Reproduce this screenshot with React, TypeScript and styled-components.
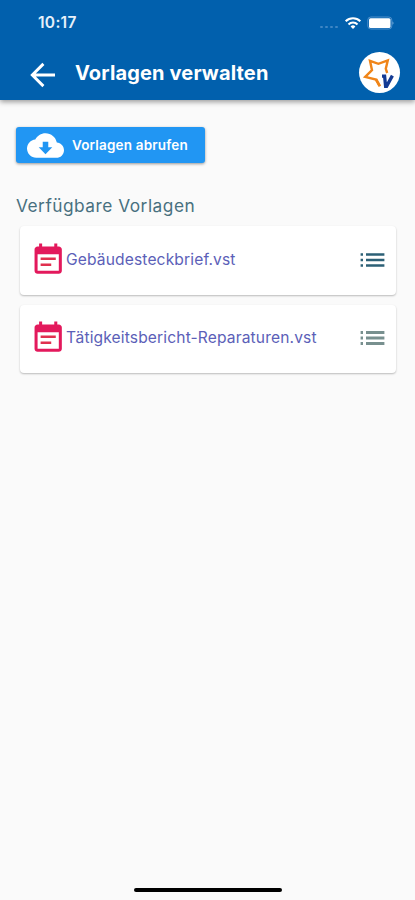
import React from "react";
import styled, { createGlobalStyle } from "styled-components";

const GlobalStyle = createGlobalStyle`
  * { box-sizing: border-box; }
  body { margin: 0; background: #fafafa; font-family: Inter, Roboto, sans-serif; }
`;

const Screen = styled.div`
  display: flex;
  flex-direction: column;
  height: 900px;
  width: 415px;
  background: #fafafa;
  overflow: hidden;
`;

const Header = styled.header`
  flex: none;
  height: 100px;
  background: #0160ad;
  box-shadow: 0 2px 5px rgba(0, 0, 0, 0.38);
  color: #fff;
`;

const StatusBar = styled.div`
  display: flex;
  align-items: center;
  height: 46px;
  padding: 0 21px 0 38px;
`;

const Clock = styled.span`
  flex: 1;
  font-size: 15.5px;
  font-weight: 600;
  line-height: 20px;
  letter-spacing: 0.3px;
  color: #e6f0fa;
`;

const StatusIcons = styled.svg`
  display: block;
  flex: none;
`;

const AppBar = styled.div`
  display: flex;
  align-items: center;
  height: 53px;
  padding: 0 15px 0 30px;
`;

const Title = styled.h1`
  flex: 1;
  margin: 0 0 0 19px;
  font-size: 20px;
  font-weight: 700;
  line-height: 26px;
  letter-spacing: 0.15px;
`;

const Avatar = styled.div`
  width: 41px;
  height: 41px;
  border-radius: 50%;
  background: #fff;
  overflow: hidden;
`;

const Content = styled.main`
  flex: 1;
  display: flex;
  flex-direction: column;
  align-items: flex-start;
  padding: 27px 19px 0 16px;
`;

const FetchButton = styled.button`
  display: flex;
  align-items: center;
  gap: 8px;
  width: 189px;
  height: 36px;
  padding: 0 0 0 11px;
  border: 0;
  border-radius: 3px;
  background: #2196f3;
  box-shadow: 0 1px 3px rgba(0, 0, 0, 0.4);
  color: #fff;
  font: 600 13.5px/20px Inter, Roboto, sans-serif;
  letter-spacing: 0.17px;
  white-space: nowrap;
`;

const SectionTitle = styled.h2`
  margin: 31px 0 0;
  font-size: 17.3px;
  font-weight: 400;
  line-height: 24px;
  letter-spacing: 0.5px;
  color: #48707f;
`;

const TemplateList = styled.ul`
  display: flex;
  flex-direction: column;
  gap: 10px;
  align-self: stretch;
  margin: 8px 0 0 4px;
  padding: 0;
  list-style: none;
`;

const TemplateCard = styled.li`
  display: flex;
  align-items: center;
  height: 68.5px;
  padding: 0 11px 1px 9.6px;
  border-radius: 4px;
  background: #fff;
  box-shadow: 0 1px 2px rgba(0, 0, 0, 0.26);
`;

const FileName = styled.span`
  flex: 1;
  font-size: 15.6px;
  line-height: 22px;
  letter-spacing: 0.13px;
  color: #5c5fb8;
  white-space: nowrap;
`;

const HomeIndicator = styled.div`
  flex: none;
  align-self: center;
  width: 148px;
  height: 4px;
  margin-bottom: 8px;
  border-radius: 2px;
  background: #000;
`;

const StatusGlyphs = () => (
  <StatusIcons width="76" height="16" viewBox="318 15 76 16">
    <g fill="#3f86c4">
      <rect x="320" y="26" width="3" height="2" rx="1" />
      <rect x="325" y="26" width="3" height="2" rx="1" />
      <rect x="330" y="26" width="3" height="2" rx="1" />
      <rect x="335" y="26" width="3" height="2" rx="1" />
    </g>
    <g fill="none" stroke="#fff" strokeWidth="2.1">
      <path d="M345.7 21.2a10.4 10.4 0 0 1 14.6 0" />
      <path d="M348.5 24.4a6.4 6.4 0 0 1 9 0" />
    </g>
    <path d="M350.6 26.4a3.5 3.5 0 0 1 4.8 0L353 29z" fill="#fff" />
    <rect x="367.8" y="17" width="24" height="12" rx="3" fill="none" stroke="#4c8fcb" strokeWidth="1" />
    <rect x="369" y="18.3" width="21.5" height="9.6" rx="1.5" fill="#fff" />
    <path d="M392.6 21.2q1.6 1.8 0 3.6z" fill="#a9caea" />
  </StatusIcons>
);

const BackArrowSvg = styled.svg`
  flex: none;
  margin-top: 4px;
`;

const BackArrow = () => (
  <BackArrowSvg width="26" height="26" viewBox="0 0 26 26" fill="none" stroke="#fff" strokeWidth="2.9">
    <path d="M25 13H3M13.4 1.9L2.3 13l11.1 11.1" />
  </BackArrowSvg>
);

const Logo = () => (
  <svg width="41" height="41" viewBox="0 0 41 41" fill="none">
    <path
      d="M20.5 33.6L17 27.6L6.2 24.8L13 18.2L11 8.8L19.4 11.8L28.8 8.4L26.8 16.8L28.2 21"
      stroke="#f08519"
      strokeWidth="2.4"
      strokeLinejoin="miter"
    />
    <path d="M17 27.2L20.9 34.4" stroke="#f08519" strokeWidth="2.7" />
    <path d="M23 24.2h2.6l1 10.2h1L33.4 23.6" stroke="#143b94" strokeWidth="3.3" />
  </svg>
);

const CloudIcon = () => (
  <svg width="37" height="37" viewBox="0 0 24 24" fill="#fff">
    <path d="M19.35 10.04C18.67 6.59 15.64 4 12 4 9.11 4 6.6 5.64 5.35 8.04 2.34 8.36 0 10.91 0 14c0 3.31 2.69 6 6 6h13c2.76 0 5-2.24 5-5 0-2.64-2.05-4.78-4.65-4.96zM16.4 13.2L12 17.6l-4.4-4.4h2.6V9.6h3.6v3.6h2.6z" />
  </svg>
);

const NoteIcon = styled.svg`
  flex: none;
  display: block;
`;

const EventNote = () => (
  <NoteIcon width="36.4" height="36.4" viewBox="0 0 24 24" fill="#e3195c">
    <path d="M19 3h-1V1h-2v2H8V1H6v2H5c-1.1 0-2 .9-2 2v14c0 1.1.9 2 2 2h14c1.1 0 2-.9 2-2V5c0-1.1-.9-2-2-2zm0 16H5V8h14v11z" />
    <path d="M7 10.2h10v1.7H7zM7 14.2h7v1.7H7z" fill="#e0304f" />
  </NoteIcon>
);

const ListIcon = ({ color, weight }: { color: string; weight: number }) => (
  <svg width="25" height="16" viewBox="0 0 25 16" stroke={color} strokeWidth={weight}>
    <path d="M.6 2.4H3M.6 7.9H3M.6 13.4H3M6 2.4h18.4M6 7.9h18.4M6 13.4h18.4" />
  </svg>
);

const templates = [
  { name: "Gebäudesteckbrief.vst", color: "#2c6076", weight: 2.5 },
  { name: "Tätigkeitsbericht-Reparaturen.vst", color: "#78908f", weight: 3 },
];

export default function App() {
  return (
    <>
      <GlobalStyle />
      <Screen>
        <Header>
          <StatusBar>
            <Clock>10:17</Clock>
            <StatusGlyphs />
          </StatusBar>
          <AppBar>
            <BackArrow />
            <Title>Vorlagen verwalten</Title>
            <Avatar>
              <Logo />
            </Avatar>
          </AppBar>
        </Header>
        <Content>
          <FetchButton>
            <CloudIcon />
            Vorlagen abrufen
          </FetchButton>
          <SectionTitle>Verfügbare Vorlagen</SectionTitle>
          <TemplateList>
            {templates.map((t) => (
              <TemplateCard key={t.name}>
                <EventNote />
                <FileName>{t.name}</FileName>
                <ListIcon color={t.color} weight={t.weight} />
              </TemplateCard>
            ))}
          </TemplateList>
        </Content>
        <HomeIndicator />
      </Screen>
    </>
  );
}
